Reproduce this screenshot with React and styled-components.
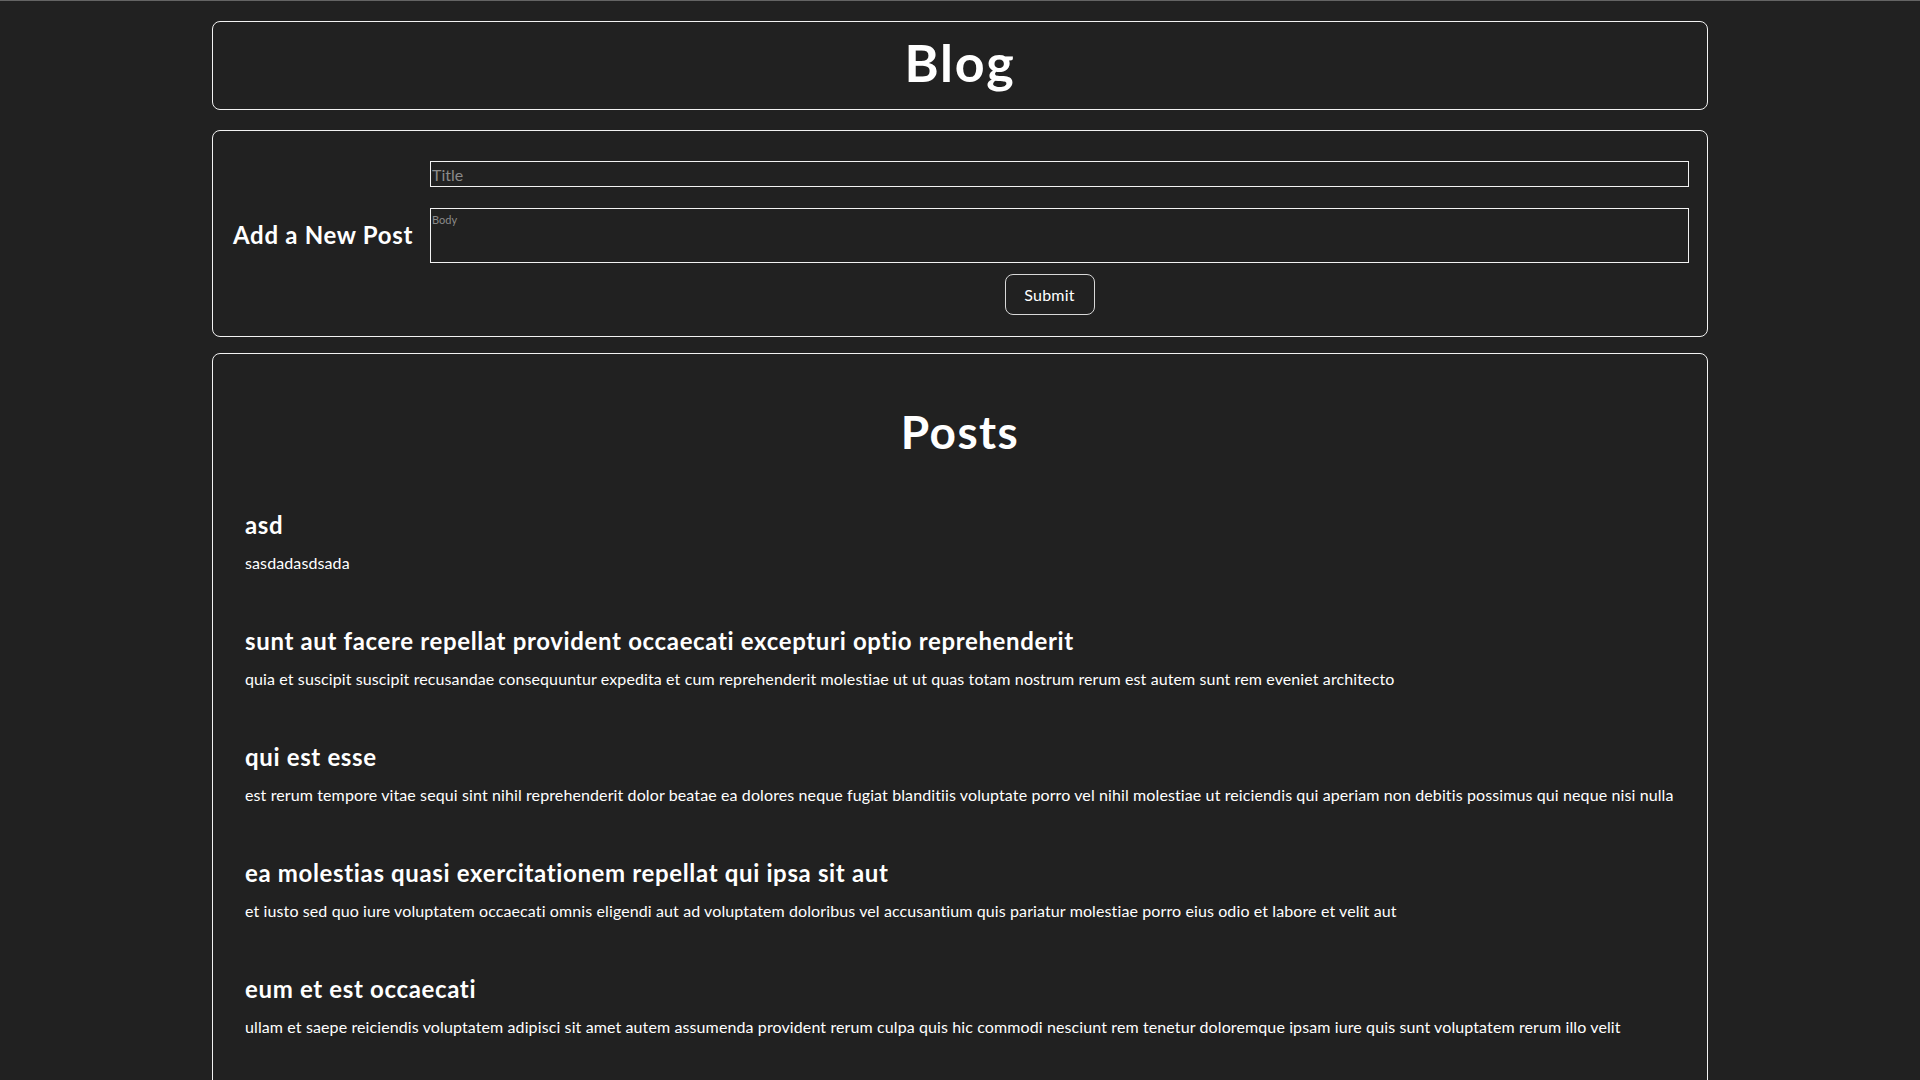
import { useState } from "react"
import styled, { createGlobalStyle } from "styled-components"

//DATA
const initialPosts = [
  { id: 101, title: "asd", body: "sasdadasdsada" },
  {
    id: 1,
    title: "sunt aut facere repellat provident occaecati excepturi optio reprehenderit",
    body: "quia et suscipit suscipit recusandae consequuntur expedita et cum reprehenderit molestiae ut ut quas totam nostrum rerum est autem sunt rem eveniet architecto",
  },
  {
    id: 2,
    title: "qui est esse",
    body: "est rerum tempore vitae sequi sint nihil reprehenderit dolor beatae ea dolores neque fugiat blanditiis voluptate porro vel nihil molestiae ut reiciendis qui aperiam non debitis possimus qui neque nisi nulla",
  },
  {
    id: 3,
    title: "ea molestias quasi exercitationem repellat qui ipsa sit aut",
    body: "et iusto sed quo iure voluptatem occaecati omnis eligendi aut ad voluptatem doloribus vel accusantium quis pariatur molestiae porro eius odio et labore et velit aut",
  },
  {
    id: 4,
    title: "eum et est occaecati",
    body: "ullam et saepe reiciendis voluptatem adipisci sit amet autem assumenda provident rerum culpa quis hic commodi nesciunt rem tenetur doloremque ipsam iure quis sunt voluptatem rerum illo velit",
  },
  {
    id: 5,
    title: "nesciunt quas odio",
    body: "repudiandae veniam quaerat sunt sed alias aut fugiat sit autem sed est voluptatem omnis possimus esse voluptatibus quis est aut tenetur dolor neque",
  },
  {
    id: 6,
    title: "dolorem eum magni eos aperiam quia",
    body: "ut aspernatur corporis harum nihil quis provident sequi mollitia nobis aliquid molestiae perspiciatis et ea nemo ab reprehenderit accusantium quas voluptate dolores velit et doloremque molestiae",
  },
]

function App() {

  //STATES
  const [posts, setPosts] = useState(initialPosts)
  const [title, setTitle] = useState("")
  const [body, setBody] = useState("")

  //HANDLE SUBMIT
  const handleSubmit = (e) => {

    e.preventDefault()
    if (!title.trim()) return
    setPosts(current => [{ id: Date.now(), title, body }, ...current])
    setTitle("")
    setBody("")

  }

  return (

    <>
      <GlobalStyle />

      <Page>

        <Header>
          <BlogTitle>Blog</BlogTitle>
        </Header>

        <FormCard onSubmit={handleSubmit}>

          <FormLabel>Add a New Post</FormLabel>

          <Fields>
            <TitleInput
              placeholder="Title"
              value={title}
              onChange={e => setTitle(e.target.value)}
            />
            <BodyInput
              placeholder="Body"
              value={body}
              onChange={e => setBody(e.target.value)}
            />
            <SubmitButton type="submit">Submit</SubmitButton>
          </Fields>

        </FormCard>

        <PostsCard>

          <PostsTitle>Posts</PostsTitle>

          <PostList>
            {posts.map(post => (
              <Post key={post.id}>
                <PostTitle>{post.title}</PostTitle>
                <PostBody>{post.body}</PostBody>
              </Post>
            ))}
          </PostList>

        </PostsCard>

      </Page>
    </>

  )

}

export default App

//STYLES

const GlobalStyle = createGlobalStyle`
  * {
    box-sizing: border-box;
  }
  body {
    margin: 0;
    border-top: 1px solid #646464;
    background-color: #212121;
    color: #ffffff;
    font-family: Lato, "Open Sans", sans-serif;
  }
`
const Page = styled.div`
  width: 1496px;
  margin: 0 auto;
  padding: 20px 0 40px;
`
const Card = styled.div`
  border: 1px solid #f2f2f2;
  border-radius: 8px;
`
const Header = styled(Card)`
  padding: 0 0 7px;
  text-align: center;
`
const BlogTitle = styled.h1`
  margin: 0;
  font-size: 52px;
  line-height: 80px;
  font-weight: 700;
  letter-spacing: 1.8px;
`
const FormCard = styled(Card).attrs({ as: "form" })`
  display: flex;
  align-items: center;
  margin-top: 20px;
  padding: 30px 18px 21px 20px;
`
const FormLabel = styled.h2`
  flex: 0 0 197px;
  margin: 0 0 7px;
  font-size: 24px;
  font-weight: 700;
  letter-spacing: 0.7px;
`
const Fields = styled.div`
  display: flex;
  flex-direction: column;
  flex: 1;
`
const TitleInput = styled.input`
  height: 26px;
  padding: 0 1px;
  border: 1px solid #f2f2f2;
  background: transparent;
  color: #ffffff;
  font-family: inherit;
  font-size: 16px;
  outline: none;

  &::placeholder {
    color: #8a8a8a;
  }
`
const BodyInput = styled.textarea`
  height: 55px;
  margin-top: 21px;
  padding: 4px 1px;
  border: 1px solid #f2f2f2;
  background: transparent;
  color: #ffffff;
  font-family: inherit;
  font-size: 11px;
  resize: none;
  outline: none;

  &::placeholder {
    color: #8a8a8a;
  }
`
const SubmitButton = styled.button`
  align-self: center;
  width: 90px;
  height: 41px;
  margin: 11px 20px 0 0;
  border: 1px solid #d8d8d8;
  border-radius: 8px;
  background: transparent;
  color: #ffffff;
  font-family: inherit;
  font-size: 16px;
  letter-spacing: 0.2px;
  cursor: pointer;
`
const PostsCard = styled(Card)`
  margin-top: 16px;
  padding: 50px 0 40px;
`
const PostsTitle = styled.h2`
  margin: 0;
  text-align: center;
  font-size: 46px;
  line-height: 56px;
  font-weight: 700;
  letter-spacing: 1.4px;
`
const PostList = styled.div`
  display: flex;
  flex-direction: column;
  gap: 51px;
  padding: 49px 20px 0 32px;
`
const Post = styled.article`
  display: flex;
  flex-direction: column;
  gap: 11px;
`
const PostTitle = styled.h3`
  margin: 0;
  font-size: 24px;
  line-height: 32px;
  font-weight: 700;
  letter-spacing: 0.65px;
`
const PostBody = styled.p`
  margin: 0;
  font-size: 16px;
  line-height: 22px;
  letter-spacing: 0.11px;
`
